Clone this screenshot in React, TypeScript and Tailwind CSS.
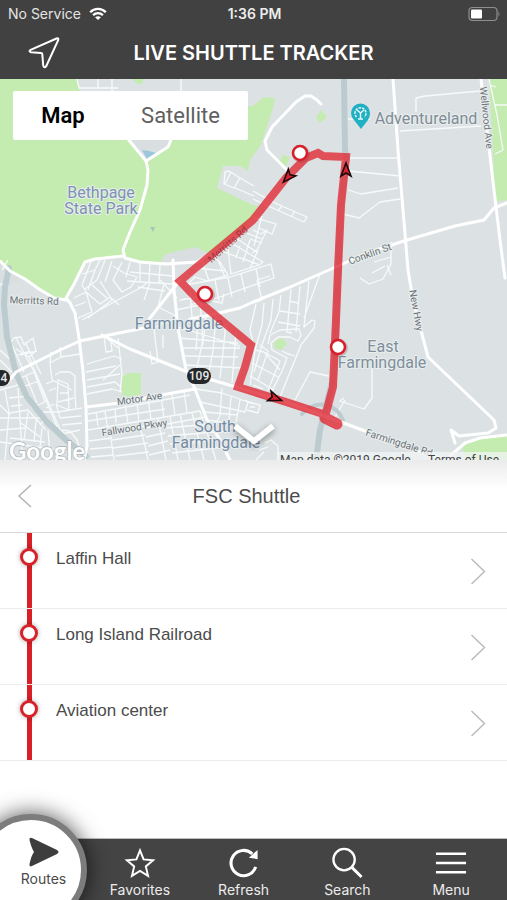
import type { ReactNode } from 'react'

type Label = {
  text: string
  x: number
  y: number
  size: number
  color: string
  rotate?: number
}

const stops = ['Laffin Hall', 'Long Island Railroad', 'Aviation center']

const parks = [
  'M0 79H77L80 92H130L146 160L172 138L200 106H253L264 97L275 98L273 108L261 145L250 160L248 171L240 166H223L217 188L253 205L258 206L253 220L208 257L162 263H140L125 256L90 259L82 264L76 282L66 298L60 300L50 295L33 284L22 277L7 270L0 261Z',
  'M132 79H144L142 84H138Z',
  'M321 110L327 117L320 123L316 118Z',
  'M283 155L290 157L286 166L279 162Z',
  'M489 79H507V200L495 202L493 152Z',
  'M122 377L128 373H141V394L131 397L122 395Z',
  'M275 341L283 338L287 344L281 350L274 348Z',
  'M507 434L482 437L468 441L462 449L470 460H507Z',
]

// built-up patches that cut into the park
const patches = [
  'M128 138H172L164 150L148 162Z',
  'M162 258L166 254L195 247L210 254L200 262L162 264Z',
  'M0 262L10 271L22 280L8 285L0 282Z',
]

const highways = [
  'M9 268L5 287L4 305L7 337L16 373L27 397L47 422L66 440L86 456',
  'M344 79L345 150L347 160',
  'M346 165L341 205L338 270L335 370L325 410L320 430L316 460',
]

const mainRoads = [
  'M128 139L146 161L148 170L147 185L140 210L130 232L123 250L125 258L140 262L166 264L197 262L210 254',
  'M171 140L168 147L146 161',
  'M123 256L95 259L85 262L80 272L74 284L66 298L70 303L75 313L79 338L83 371L86 407L87 446L84 460',
  'M0 261L10 271L25 279L39 289L54 298L66 300',
  'M393 79L398 150L408 270L413 300L428 357L494 420L496 428L488 433L459 436L451 430L455 443',
  'M481 79L487 130L494 190L500 240L505 278',
  'M507 203L494 208L484 220L455 226L407 240L370 252L338 266L288 288L253 302L240 308L210 315L190 319',
  'M180 280L172 290L150 318L144 328L104 336L80 341L60 350L16 372L8 382',
  'M102 335L130 349L160 361L195 375L236 387L286 402L330 418L365 431L400 446L450 461',
  'M173 260L174 290L178 328L186 370L195 389L207 420L219 438L230 460',
  'M86 407L120 403L150 397L195 389',
  'M507 435L480 438L465 443L450 456',
  'M288 171L267 150L265 141L272 127L296 102L305 96L311 96L317 100L321 104',
]

const streets = [
  // north
  'M77 79L79 88H118M98 79V88M181 79V92M112 79V92M80 95L100 94',
  'M225 172L229 171L240 178L234 188L224 184ZM235 188L254 196M240 178L254 186M231 172L225 184',
  'M253 191L275 203L307 217L304 222L275 209L253 199M282 206L278 211M295 211L291 217',
  'M253 230L261 234L267 230L257 250L252 253M253 217L276 224L272 234L259 228M250 239L262 243M262 216L254 246',
  'M349 158H397M349 171L400 176M348 190L361 194L398 188M343 214L359 218L380 202L400 199M400 131L481 126M416 112V98L425 96L480 91M348 119H370',
  'M489 79L497 115L503 150M503 150L495 154M495 105H507M490 85L496 87',
  'M374 262L391 257M391 242V264L383 279L369 284L360 278M372 273L385 266M387 265L391 275',
  // around the centre
  'M82 274L95 270L100 260M92 259L82 285L86 292M95 270L88 290M105 260L97 280L85 289M112 261L105 282M122 262L113 280L122 292M113 266L124 273L137 277L131 287L122 292L113 280',
  'M74 298L86 292L92 312L78 318M86 302L75 306M86 292L100 304L110 297L119 305M92 285L108 299M100 281L112 300L88 318M82 320L105 307L140 288L150 281',
  'M130 262L126 277M140 263V281M150 263L149 282M160 264L159 283M130 272L173 276M127 281L172 284M138 287L165 291M150 283L144 300M164 284L157 311',
  'M210 254L220 262L228 275L207 281L195 277L185 287M218 260L225 277M195 268L226 271M202 261L209 281M224 252L260 265M228 249L231 274L259 265L263 262L258 259L233 244M236 238L258 253M244 232L262 239M240 246L236 258M250 240L243 262M258 250L250 268M200 269L190 277',
  'M185 285L230 277L271 264L274 278L214 299M215 280L219 301M228 278L232 297M241 274L245 292M256 269L260 287M190 305L207 300L222 303L224 294',
  'M180 300L205 296M176 310L204 304M190 291L193 330M200 300L203 345M160 308L176 316M155 327L176 318M160 280L177 298',
  'M175 326L240 346M179 338L238 343M183 348H240M184 356L238 357M186 365L242 368M206 315L204 335L196 372M216 317L213 351L208 376M226 323L223 352L220 378M236 332L232 383M198 322L196 350',
  // grid between the two legs of the route
  'M254 303L262 300L257 280L270 276M256 304L250 330L253 342M264 303L262 325L255 350L250 385M273 299L271 320L262 345L254 372M281 295L279 312L270 333M291 289L287 332L292 333M300 286L296 332M309 281L304 327L312 320L315 321L314 328L301 345L284 387L278 402M320 274L304 318M280 311L300 314M278 322L300 326M289 301L298 303',
  'M268 344L270 335L280 330L299 329L301 335L298 341L290 337H278L271 343L272 350L287 358L282 371L270 395M264 352L280 361L268 390M255 350L264 352L280 370M252 363L278 377M250 376L274 390M260 345L268 351L258 380M290 355L282 351M295 356L286 353',
  'M253 385L263 389M295 400L310 372L329 376M372 365V398L364 409L340 401L344 398M245 400L253 404M345 400L335 417',
  // west
  'M2 270L8 260M0 285L9 280M10 344L14 338L21 337L24 345L33 338L36 351L29 357L33 366M16 338L37 377L48 405L57 427M25 342L41 374M29 357L16 349M37 351L20 355M12 345L24 372M18 355L30 351',
  'M16 380L34 372L45 402L32 408L24 394M26 376L37 403M19 388L39 381M33 367L62 434L80 430M50 363L52 380L72 390M51 352L50 363L61 357L60 347M61 357L80 354M55 375L60 372L70 372L75 376V395L76 408M58 379L57 405L69 410L68 384L58 380M60 393H69M74 398L58 402M58 412L82 408M56 404L60 418L81 416M62 425L82 423M46 384L53 381M49 391L56 388M54 404L46 408M43 412L58 412',
  'M0 350L13 362M0 360L12 372M0 390L18 385M5 390L9 412L5 460M9 398L30 396M11 406L22 405M9 413L28 410L46 430M18 388L22 450M0 405L10 415M0 418L40 418M0 430L25 428M28 412L24 440M36 420L34 442M42 428L40 448M10 438L45 442M0 442L60 450M48 430L50 455M13 450V460',
  'M65 438L62 430L70 431L77 440L80 450M40 425L47 417M21 423L40 437',
  // south-west rows
  'M87 364L114 356L122 359M86 372L116 366M87 380L120 374M87 387L115 382L121 387M87 394L112 389L122 392M88 414L190 395M88 421L165 409M88 430L200 411M89 441L112 438M90 449L113 447M91 457L114 455',
  'M118 338L122 374L120 392M104 336L106 352L112 351L111 341M150 351L152 364L158 362L157 353M158 361L155 338L154 328M163 335V348M118 348L104 336M120 365L103 380',
  'M96 412L98 426M105 411L107 425L110 432L114 460M115 409L116 423M125 404L128 424M137 401L139 423L145 446L148 460M148 398L151 420M161 396L164 418M172 394L175 416M184 391L187 413M110 432L145 426M112 440L145 435M113 448L148 443M115 456L149 452',
  'M146 437L165 433M148 446L168 441M149 455L170 450M158 419L166 460M170 417L178 460M180 414L190 460M146 428L205 417M166 428L210 424M168 436L214 432M170 444L217 440M172 453L224 447M192 413L204 460M200 411L216 460',
  'M196 389L222 393L248 402L245 412L200 402M222 388L220 415L214 428M231 397L229 420M240 400L236 423M204 412L238 415M207 420L234 424M248 402L260 405L258 413L247 410M250 407H255M219 433L236 426L243 436M265 443L271 440L278 446V460M259 450L268 447M256 460L264 452',
]

const routePath =
  'M323 415L326 413L333 387L336 320L338 270L341 205L346 157L323 156L318 153L306 158L286 178L253 220L240 231L180 281L203 305L251 345L245 367L238 387L286 402L323 414'

const labels: Label[] = [
  { text: 'Bethpage', x: 101, y: 198, size: 16, color: '#7d92b3' },
  { text: 'State Park', x: 101, y: 214, size: 16, color: '#7d92b3' },
  { text: 'Adventureland', x: 426, y: 124, size: 16, color: '#7f8c97' },
  { text: 'East', x: 383, y: 352, size: 16, color: '#7f8f9c' },
  { text: 'Farmingdale', x: 382, y: 368, size: 16, color: '#7f8f9c' },
  { text: 'South', x: 215, y: 432, size: 16, color: '#748aa3' },
  { text: 'Farmingdale', x: 216, y: 448, size: 16, color: '#748aa3' },
  { text: 'Farmingdale', x: 179, y: 329, size: 16, color: '#748aa3' },
  { text: 'Merritts Rd', x: 34, y: 304, size: 10, color: '#6b7278', rotate: 2 },
  { text: 'Motor Ave', x: 140, y: 402, size: 10, color: '#6b7278', rotate: -8 },
  { text: 'Fallwood Pkwy', x: 135, y: 431, size: 10, color: '#6b7278', rotate: -9 },
  { text: 'Conklin St', x: 371, y: 257, size: 10, color: '#6b7278', rotate: -20 },
  { text: 'New Hwy', x: 413, y: 311, size: 10, color: '#6b7278', rotate: 80 },
  { text: 'Wellwood Ave', x: 483, y: 118, size: 10, color: '#6b7278', rotate: 84 },
  { text: 'Farmingdale Rd', x: 398, y: 446, size: 10, color: '#6b7278', rotate: 18 },
]

const mapStops = [
  [300, 153],
  [205, 294],
  [338, 347],
]

const arrows = [
  [346, 170, 0],
  [288, 177, 222],
  [275, 398, 110],
]

function StatusBar() {
  return (
    <div className="grid grid-cols-3 items-center h-7 pl-2 pr-1.5 text-[14px] leading-5">
      <div className="flex items-center gap-2 text-[#e4e4e4]">
        <span className="whitespace-nowrap">No Service</span>
        <svg width="18" height="14" viewBox="0 0 18 14" fill="none" stroke="#fff" strokeWidth="2.3">
          <path d="M1.2 5.2C5.6 .7 12.4 .7 16.8 5.2" />
          <path d="M4.1 8.2C6.9 5.5 11.1 5.5 13.9 8.2" />
          <path d="M9 13L6.1 10.3Q9 8 11.9 10.3Z" fill="#fff" stroke="none" />
        </svg>
      </div>
      <div className="text-center font-semibold text-[#ececec]">1:36 PM</div>
      <svg className="justify-self-end" width="33" height="16" viewBox="0 0 33 16">
        <rect x="1" y="1.5" width="28" height="13" rx="3.5" fill="none" stroke="#8f8f8f" strokeWidth="1.2" />
        <rect x="3" y="3.5" width="11" height="9" rx="1" fill="#fff" />
        <path d="M30.5 5.5Q32.5 8 30.5 10.5Z" fill="#8f8f8f" />
      </svg>
    </div>
  )
}

function RouteMap() {
  return (
    <svg
      className="block w-full h-full font-['Roboto',sans-serif]"
      viewBox="0 79 507 381"
      preserveAspectRatio="xMidYMid slice"
      role="img"
      aria-label="Shuttle route map"
    >
      <rect x="0" y="79" width="507" height="381" fill="#dce2e3" />
      <g fill="#c4ebb0">
        {parks.map((d) => <path key={d} d={d} />)}
      </g>
      <g fill="#d9dfe1">
        {patches.map((d) => <path key={d} d={d} />)}
      </g>
      <path d="M142 150L149 151L156 153L147 159Z" fill="#9dc6dc" />
      <path d="M150 227L155 227L153 232Z" fill="#a9c3bd" />

      <g fill="none" stroke="#f7fafa" strokeWidth="1.3" strokeLinejoin="round">
        {streets.map((d) => <path key={d} d={d} />)}
      </g>
      <g fill="none" stroke="#bccbd0" strokeWidth="6" strokeLinecap="round">
        {highways.map((d) => <path key={d} d={d} />)}
        <path d="M302 414Q313 402 326 405Q338 408 343 420" strokeWidth="4" />
      </g>
      <g fill="none" stroke="#fff" strokeWidth="3" strokeLinejoin="round" strokeLinecap="round">
        {mainRoads.map((d) => <path key={d} d={d} />)}
      </g>

      <g textAnchor="middle" stroke="#e9eeee" strokeWidth="2" strokeLinejoin="round" paintOrder="stroke">
        {labels.map((l, i) => (
          <text
            key={i}
            x={l.x}
            y={l.y}
            fontSize={l.size}
            fill={l.color}
            transform={l.rotate ? `rotate(${l.rotate} ${l.x} ${l.y})` : undefined}
          >
            {l.text}
          </text>
        ))}
      </g>

      <g fontSize="12" fontWeight="500" fill="#e8e8e8" textAnchor="middle">
        <rect x="187" y="368" width="24" height="16" rx="8" fill="#24282a" />
        <text x="199" y="380">109</text>
        <rect x="-14" y="370" width="24" height="16" rx="8" fill="#24282a" />
        <text x="4" y="382">4</text>
      </g>

      <g opacity="0.82" fill="none" stroke="#e12f3a" strokeLinejoin="round" strokeLinecap="round">
        <path d={routePath} strokeWidth="8" strokeLinejoin="miter" />
        <path d="M325 418L337 424" strokeWidth="11" />
      </g>
      <text
        x="230" y="247" fontSize="10" fill="#7d2a35" opacity="0.65" textAnchor="middle"
        transform="rotate(-41 230 247)"
      >
        Merritts Rd
      </text>

      {arrows.map(([x, y, angle]) => (
        <path
          key={x}
          d="M0 -7L5 6L0 3L-5 6Z"
          fill="#d8202f"
          stroke="#1c0a0c"
          strokeWidth="1.6"
          transform={`translate(${x} ${y}) rotate(${angle})`}
        />
      ))}
      {mapStops.map(([x, y]) => (
        <g key={x}>
          <circle cx={x + 1} cy={y + 1} r="9" fill="#7d3c42" opacity="0.25" />
          <circle cx={x} cy={y} r="7" fill="#fff" stroke="#d71f2b" strokeWidth="2.6" />
        </g>
      ))}

      {/* Adventureland pin */}
      <path d="M361 129L354 120Q351 117 351 113A9.500 9.500 0 0 1 370 113Q370 117 368 120Z" fill="#1fb0c3" />
      <g fill="none" stroke="#e6f7fa" strokeWidth="1.5">
        <path d="M356.500 117A5.500 5.500 0 1 1 364.500 117" strokeDasharray="2.500 1" />
        <path d="M360.500 112V119M360.500 113L357 110M360.500 113L364 110M358 119H363" />
      </g>

      <text
        x="9" y="460" fontSize="24" fontWeight="700" fill="#fff" stroke="#aab3b6" strokeWidth="1.4"
        paintOrder="stroke" className="font-['Lato',sans-serif]"
      >
        Google
      </text>
      <rect x="277" y="452" width="230" height="8" fill="#f2f4f4" opacity="0.75" />
      <g fontSize="12" fill="#3f4345">
        <text x="280" y="464">Map data ©2019 Google</text>
        <text x="428" y="464">Terms of Use</text>
      </g>
    </svg>
  )
}

function StopRow({ name }: { name: string }) {
  return (
    <li className="border-b border-[#ececec]">
      <button type="button" className="flex w-full h-[75px] pl-[19px] pr-[21px] text-left">
        <span className="relative flex w-5 h-full justify-center">
          <span className="w-[5px] h-full bg-[#da1f26]" />
          <span className="absolute top-[15px] left-px size-[18px] rounded-full border-3 border-[#d8222a] bg-white shadow-[0_0_5px_rgba(0,0,0,0.35)]" />
        </span>
        <span className="flex-1 pl-[17px] pt-4 text-[17px] leading-5 text-[#4b4b4b]">{name}</span>
        <svg className="self-center" width="16" height="28" viewBox="0 0 16 28" fill="none" stroke="#b9b9b9" strokeWidth="1.4">
          <path d="M1.500 2L14.500 14.500L1.500 27" />
        </svg>
      </button>
    </li>
  )
}

function Tab({ label, children }: { label: string; children: ReactNode }) {
  return (
    <button type="button" className="flex flex-1 flex-col items-center pt-2 text-[14px] leading-5 text-[#ececec]">
      <svg width="34" height="34" viewBox="0 0 34 34" fill="none" stroke="#fff">{children}</svg>
      {label}
    </button>
  )
}

export default function App() {
  return (
    <div className="relative flex flex-col min-h-screen overflow-hidden bg-white font-['Inter',sans-serif]">
      <header className="bg-[#414141] text-white">
        <StatusBar />
        <div className="grid grid-cols-[88px_1fr_88px] items-center h-[51px] pb-0.5">
          <button type="button" aria-label="My location" className="justify-self-center">
            <svg width="34" height="34" viewBox="0 0 34 34" fill="none" stroke="#fff" strokeWidth="2" strokeLinejoin="round">
              <path d="M29.500 2.500Q32 1.600 31.200 4.200L19.300 30Q17.200 32.600 16.200 29.500L15.300 18.200Q15.200 17.200 14 17.100L4 16.300Q1.200 15.300 3.600 13.800Z" />
            </svg>
          </button>
          <h1 className="text-center whitespace-nowrap text-[20px] leading-6 font-semibold">LIVE SHUTTLE TRACKER</h1>
        </div>
      </header>

      <section className="relative h-[381px]">
        <RouteMap />
        <div className="absolute top-3 left-[13px] flex h-[49px] rounded-[2px] bg-white font-['Roboto',sans-serif] text-[22px] leading-6">
          <button type="button" className="w-[100px] font-semibold text-black">Map</button>
          <button type="button" className="w-[135px] text-[#5f5f5f]">Satellite</button>
        </div>
        <button type="button" aria-label="Collapse map" className="absolute bottom-3 left-1/2 -translate-x-1/2">
          <svg className="drop-shadow-[0_2px_3px_rgba(0,0,0,0.4)]" width="44" height="26" viewBox="0 0 44 26" fill="none" stroke="#fff" strokeWidth="6">
            <path d="M3 4L22 19L41 4" />
          </svg>
        </button>
      </section>

      <main className="flex-1 font-['Liberation_Sans',sans-serif]">
        <div className="grid grid-cols-[50px_1fr_64px] items-center h-[73px] border-b border-[#d9d9d9] bg-linear-to-b from-[#ebebeb] to-white to-40%">
          <button type="button" aria-label="Back" className="justify-self-center">
            <svg width="16" height="26" viewBox="0 0 16 26" fill="none" stroke="#b4b4b4" strokeWidth="1.5">
              <path d="M14 2L2 13L14 24" />
            </svg>
          </button>
          <h2 className="text-center text-[20px] leading-6 text-[#4b4b4b]">FSC Shuttle</h2>
        </div>
        <ul>
          {stops.map((name) => <StopRow key={name} name={name} />)}
        </ul>
      </main>

      <nav className="relative flex h-[62px] pl-[88px] pr-1 border-t border-[#bdbdbd] bg-[#444]">
        <button
          type="button"
          className="absolute -top-[25px] -left-[25px] size-[112px] flex flex-col items-center pt-[15px] pl-[25px] rounded-full border-6 border-[#7c7c7c] bg-white text-[14px] leading-5 text-[#4a4a4a] shadow-[0_0_22px_rgba(0,0,0,0.7)]"
        >
          <svg width="34" height="34" viewBox="0 0 34 34" fill="#3d3d3d">
            <path d="M2.500 5Q2 2 5 3L30 15Q33 17 30 19L5 31Q2 32.500 2.500 29Q4.500 20 7 17Q4.500 13 2.500 5Z" />
          </svg>
          Routes
        </button>
        <Tab label="Favorites">
          <path d="M17 3.500L20.700 12.800L30.500 13.600L23 20L25.300 29.800L17 24.600L8.700 29.800L11 20L3.500 13.600L13.300 12.800Z" strokeWidth="2" />
        </Tab>
        <Tab label="Refresh">
          <path d="M29 20.500A13 13 0 1 1 25.500 7" strokeWidth="3.200" />
          <path d="M31 3V12.500L22 11Z" fill="#fff" stroke="none" />
        </Tab>
        <Tab label="Search">
          <circle cx="14" cy="13" r="11" strokeWidth="2.400" />
          <path d="M22 21L32 31" strokeWidth="3" />
        </Tab>
        <Tab label="Menu">
          <path d="M1.500 7H32.500M1.500 16.500H32.500M1.500 26H32.500" strokeWidth="2.600" />
        </Tab>
      </nav>
    </div>
  )
}
